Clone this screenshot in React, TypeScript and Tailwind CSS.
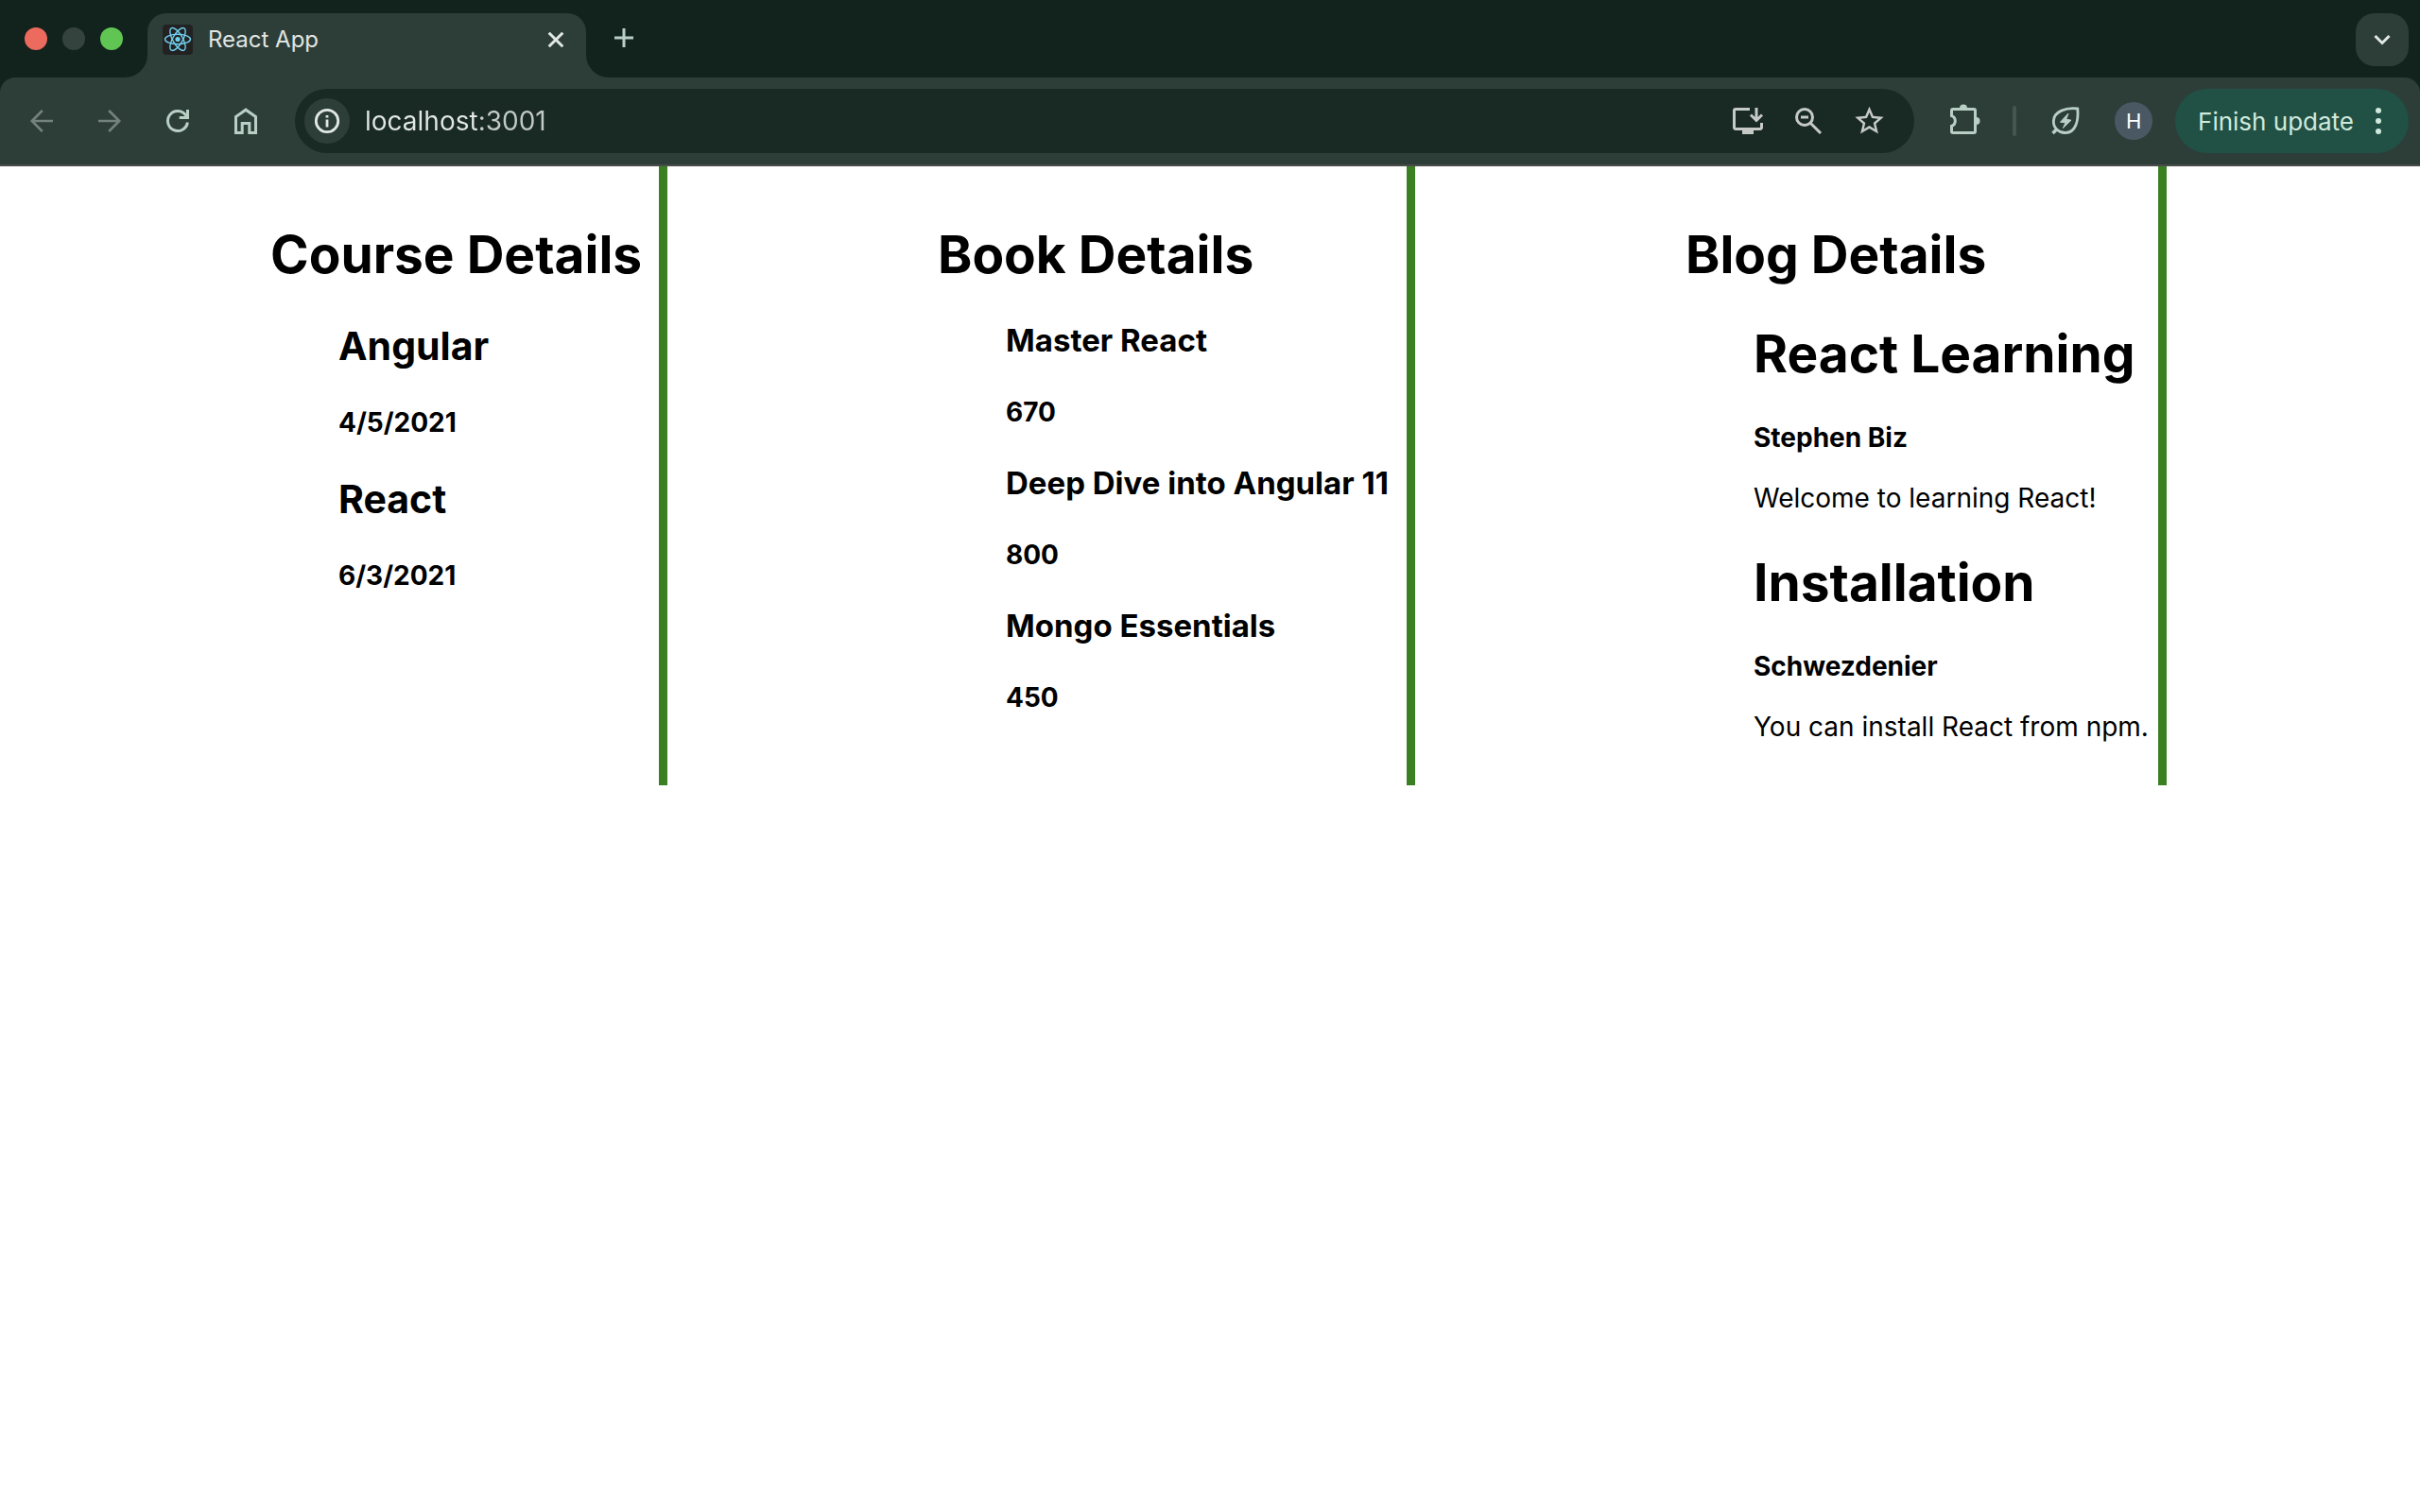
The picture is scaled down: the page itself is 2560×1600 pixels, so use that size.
import React from "react";

function ReactMark() {
  return (
    <svg viewBox="0 0 32 32" className="size-8 shrink-0" aria-hidden="true">
      <rect width="32" height="32" rx="4" fill="#222222" />
      <g fill="none" stroke="#70cfee" strokeWidth="1.4">
        <ellipse cx="16" cy="15.5" rx="13.5" ry="5.2" />
        <ellipse cx="16" cy="15.5" rx="13.5" ry="5.2" transform="rotate(60 16 15.5)" />
        <ellipse cx="16" cy="15.5" rx="13.5" ry="5.2" transform="rotate(120 16 15.5)" />
      </g>
      <circle cx="16" cy="15.5" r="2.6" fill="#70cfee" />
    </svg>
  );
}

function Icon({ children, width = 2.6 }: { children: React.ReactNode; width?: number }) {
  return (
    <svg
      viewBox="0 0 36 36"
      className="size-9"
      fill="none"
      stroke="currentColor"
      strokeWidth={width}
      aria-hidden="true"
    >
      {children}
    </svg>
  );
}

function IconButton({ label, className = "", children }: { label: string; className?: string; children: React.ReactNode }) {
  return (
    <button type="button" aria-label={label} className={`flex size-9 shrink-0 items-center justify-center ${className}`}>
      {children}
    </button>
  );
}

function TabStrip() {
  return (
    <div className="flex h-[82px] items-end bg-[#12231e]">
      <div className="flex h-[82px] w-33 shrink-0 items-center gap-4 pl-[26px]">
        <button type="button" aria-label="Close window" className="size-6 rounded-full bg-[#ed6a5e]" />
        <button type="button" aria-label="Minimize window" className="size-6 rounded-full bg-[#35433f]" />
        <button type="button" aria-label="Zoom window" className="size-6 rounded-full bg-[#61c554]" />
      </div>
      <div className="size-6 bg-[#2d3e39]">
        <div className="size-6 rounded-br-[24px] bg-[#12231e]" />
      </div>
      <div className="flex h-[68px] w-[464px] items-start rounded-t-[20px] bg-[#2d3e39] pt-3 pr-4 pl-4">
        <ReactMark />
        <span className="ml-4 grow text-[24px] leading-8 text-[#e0e5e2]">React App</span>
        <button type="button" aria-label="Close tab" className="flex size-8 items-center justify-center text-[#e2e8e4]">
          <svg viewBox="0 0 32 32" className="size-8" fill="none" stroke="currentColor" strokeWidth="3" aria-hidden="true">
            <path d="M8.7 8.7 23.3 23.3M23.3 8.7 8.7 23.3" />
          </svg>
        </button>
      </div>
      <div className="size-6 bg-[#2d3e39]">
        <div className="size-6 rounded-bl-[24px] bg-[#12231e]" />
      </div>
      <button type="button" aria-label="New tab" className="mb-[26px] flex size-8 items-center justify-center text-[#b9cfc6]">
        <svg viewBox="0 0 32 32" className="size-8" fill="none" stroke="currentColor" strokeWidth="3" aria-hidden="true">
          <path d="M16 6v20M6 16h20" />
        </svg>
      </button>
      <button
        type="button"
        aria-label="Search tabs"
        className="mr-3 mb-3 ml-auto flex size-14 items-center justify-center rounded-[20px] bg-[#2d3e39] text-[#e2e8e4]"
      >
        <Icon width={3}>
          <path d="m10.5 14 7.5 7.5 7.5-7.5" />
        </Icon>
      </button>
    </div>
  );
}

function Toolbar() {
  return (
    <div className="bg-[#12231e]">
      <div className="flex h-[94px] items-center rounded-t-2xl border-b-2 border-[#4a4c4b] bg-[#2d3e39] pr-3 pl-[26px] text-[#b9cfc6]">
        <nav aria-label="Navigation" className="flex items-center gap-9">
          <IconButton label="Back" className="text-[#74827d]">
            <Icon>
              <path d="M30 18H8M18.800 7 7.800 18l11 11" />
            </Icon>
          </IconButton>
          <IconButton label="Forward" className="text-[#74827d]">
            <Icon>
              <path d="M6 18h22M17.200 7l11 11-11 11" />
            </Icon>
          </IconButton>
          <IconButton label="Reload">
            <Icon width={3}>
              <path d="M28.400 19.500A10.500 10.500 0 1 1 26.600 12l1.900 2.500" />
              <path d="M28.500 6v8.500H19.700" />
            </Icon>
          </IconButton>
          <IconButton label="Home">
            <Icon width={3}>
              <path d="M7.500 30.500V13.500L18 6.200l10.500 7.300v17h-6.700v-10h-7.600v10z" />
            </Icon>
          </IconButton>
        </nav>
        <form
          className="ml-[34px] flex h-[68px] grow items-center rounded-full bg-[#192924] pr-[30px] pl-2.5"
          onSubmit={(e) => e.preventDefault()}
        >
          <button
            type="button"
            aria-label="View site information"
            className="flex size-12 shrink-0 items-center justify-center rounded-full bg-[#2d3e39] text-[#e2e8e4]"
          >
            <Icon width={2.8}>
              <circle cx="18" cy="18" r="11.700" />
              <path d="M18 16.500v8M18 12v2.500" />
            </Icon>
          </button>
          <input
            type="text"
            aria-label="Address"
            defaultValue="localhost:3001"
            className="ml-4 grow bg-linear-to-r from-[#e2e8e4] from-[120px] to-[#c2cac6] to-[120px] bg-clip-text text-[28px] leading-9 text-transparent outline-none"
          />
          <div className="flex items-center gap-7 text-[#c5cac7]">
            <IconButton label="Install app">
              <Icon width={3}>
                <path d="M20 5.500H5a1.500 1.500 0 0 0-1.500 1.500V25a1.500 1.500 0 0 0 1.500 1.500h26a1.500 1.500 0 0 0 1.500-1.500v-5" />
                <path d="M12 30h12" strokeWidth="4" />
                <path d="M27 4v13.500M21 11.500l6 6 6-6" />
              </Icon>
            </IconButton>
            <IconButton label="Zoom level">
              <Icon width={3}>
                <circle cx="14" cy="14" r="8.500" />
                <path d="m20 20 11 11M10 14h8" />
              </Icon>
            </IconButton>
            <IconButton label="Bookmark this tab">
              <svg viewBox="1.800 2.200 20.400 20.400" className="size-[31px]" fill="currentColor" aria-hidden="true">
                <path d="m22 9.240-7.190-.62L12 2 9.190 8.630 2 9.240l5.460 4.730L5.820 21 12 17.270 18.180 21l-1.630-7.030L22 9.240zM12 15.400l-3.760 2.270 1-4.280-3.320-2.880 4.380-.38L12 6.100l1.710 4.040 4.380.38-3.320 2.880 1 4.280L12 15.400z" />
              </svg>
            </IconButton>
          </div>
        </form>
        <div className="ml-9 flex items-center">
          <IconButton label="Extensions">
            <Icon width={3}>
              <path d="M5 5.500h22a1.500 1.500 0 0 1 1.500 1.500v22a1.500 1.500 0 0 1-1.500 1.500H5A1.500 1.500 0 0 1 3.500 29v-5.700a5.600 5.600 0 0 0 0-10.600V7A1.500 1.500 0 0 1 5 5.500z" />
              <path d="M12 4.500a4 4 0 0 1 8 0zM29.500 14a4 4 0 0 1 0 8z" fill="currentColor" stroke="none" />
            </Icon>
          </IconButton>
          <span className="ml-8 h-8 w-1 rounded-full bg-[#44564f]" />
          <IconButton label="Energy Saver" className="ml-[34px]">
            <Icon width={2.8}>
              <path d="M30.800 5C19 3.600 5.300 7.500 5.300 18.500a12 12 0 0 0 12.700 12C28.500 30.500 32 18 30.800 5z" />
              <path d="M9 26.500l-4.500 4.500" strokeWidth="3.600" />
              <path d="M21 10 12.500 19.200l5.500.6-2.600 5.700 8.600-8.300-5.300-.9z" fill="currentColor" strokeWidth="1" strokeLinejoin="round" />
            </Icon>
          </IconButton>
          <button
            type="button"
            aria-label="Profile"
            className="ml-[34px] flex size-10 items-center justify-center rounded-full bg-[#4a5864] text-[22px] text-white"
          >
            H
          </button>
          <button
            type="button"
            className="ml-6 flex h-[68px] items-center rounded-full bg-[#215045] pr-3.5 pl-6 text-[26px] whitespace-nowrap text-[#cfe9dc]"
          >
            Finish update
            <svg viewBox="0 0 36 36" className="ml-2 size-9" fill="currentColor" aria-hidden="true">
              <circle cx="18" cy="7" r="3" />
              <circle cx="18" cy="18" r="3" />
              <circle cx="18" cy="29" r="3" />
            </svg>
          </button>
        </div>
      </div>
    </div>
  );
}

const courses = [
  { name: "Angular", date: "4/5/2021" },
  { name: "React", date: "6/3/2021" },
];

const books = [
  { name: "Master React", price: 670 },
  { name: "Deep Dive into Angular 11", price: 800 },
  { name: "Mongo Essentials", price: 450 },
];

const blogs = [
  { title: "React Learning", author: "Stephen Biz", text: "Welcome to learning React!" },
  { title: "Installation", author: "Schwezdenier", text: "You can install React from npm." },
];

const h1 = "text-[55px] leading-[68px] font-bold";
const h4 = "text-[28px] leading-9 font-bold";

function Column({ title, children }: { title: string; children: React.ReactNode }) {
  return (
    <section className="border-r-[9px] border-[#3a7f22] pt-[59px] pb-11 pl-[286px] whitespace-nowrap">
      <h1 className={h1}>{title}</h1>
      <ul className="mt-[37px] flex flex-col gap-[37px] pl-18">{children}</ul>
    </section>
  );
}

export default function App() {
  return (
    <div className="min-h-screen bg-white font-['Inter',sans-serif] text-black">
      <header>
        <TabStrip />
        <Toolbar />
      </header>
      <main className="grid grid-cols-[706fr_791fr_795fr_268fr]">
        <Column title="Course Details">
          {courses.map((c) => (
            <li key={c.name} className="flex flex-col gap-[37px]">
              <h2 className="text-[41px] leading-[52px] font-bold">{c.name}</h2>
              <h4 className={h4}>{c.date}</h4>
            </li>
          ))}
        </Column>
        <Column title="Book Details">
          {books.map((b) => (
            <li key={b.name} className="flex flex-col gap-[37px]">
              <h3 className="text-[33px] leading-[41px] font-bold">{b.name}</h3>
              <h4 className={h4}>{b.price}</h4>
            </li>
          ))}
        </Column>
        <Column title="Blog Details">
          {blogs.map((b) => (
            <li key={b.title}>
              <h1 className={h1}>{b.title}</h1>
              <h4 className={`mt-[37px] ${h4}`}>{b.author}</h4>
              <p className="mt-7 text-[28px] leading-9">{b.text}</p>
            </li>
          ))}
        </Column>
      </main>
    </div>
  );
}
